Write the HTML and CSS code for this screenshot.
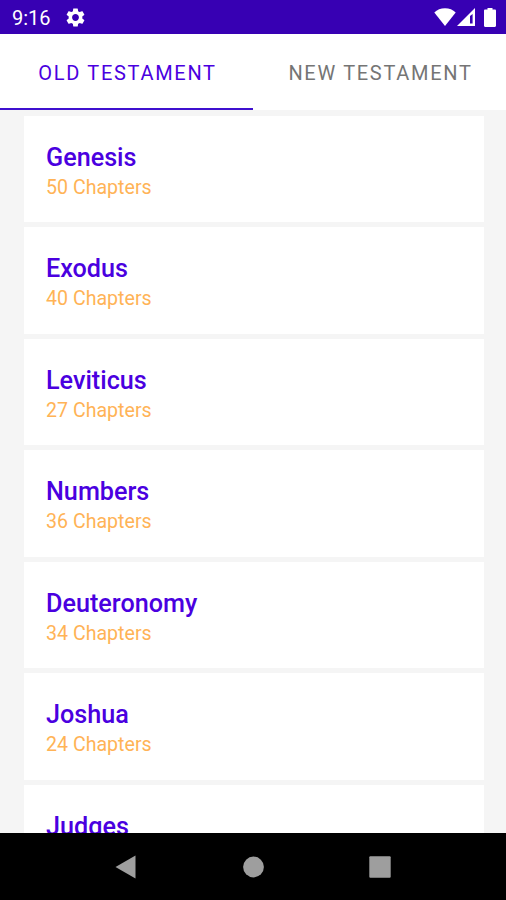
FILE: index.html
```html
<!DOCTYPE html>
<html lang="en">
<head>
    <meta charset="UTF-8">
    <meta name="viewport" content="width=device-width, initial-scale=1.0">
    <title>Bible Books</title>
    <link rel="stylesheet" href="styles.css">
</head>
<body>

<div class="status-bar">
    <span class="clock">9:16</span>
    <svg class="gear" viewBox="2 2 20 20" width="19" height="19">
        <path fill="#fff" d="M19.14 12.94c.04-.3.06-.61.06-.94 0-.32-.02-.64-.07-.94l2.03-1.58a.49.49 0 0 0 .12-.61l-1.92-3.32a.488.488 0 0 0-.59-.22l-2.39.96c-.5-.38-1.03-.7-1.62-.94l-.36-2.54a.484.484 0 0 0-.48-.41h-3.84c-.24 0-.43.17-.47.41l-.36 2.54c-.59.24-1.13.57-1.62.94l-2.39-.96c-.22-.08-.47 0-.59.22L2.74 8.87c-.12.21-.08.47.12.61l2.03 1.58c-.05.3-.09.63-.09.94s.02.64.07.94l-2.03 1.58a.49.49 0 0 0-.12.61l1.92 3.32c.12.22.37.29.59.22l2.39-.96c.5.38 1.03.7 1.62.94l.36 2.54c.05.24.24.41.48.41h3.84c.24 0 .44-.17.47-.41l.36-2.54c.59-.24 1.13-.56 1.62-.94l2.39.96c.22.08.47 0 .59-.22l1.92-3.32c.12-.22.07-.47-.12-.61l-2.01-1.58zM12 15.6c-1.98 0-3.6-1.62-3.6-3.6s1.62-3.6 3.6-3.6 3.6 1.62 3.6 3.6-1.62 3.6-3.6 3.6z"/>
    </svg>
    <div class="status-icons">
        <!-- wifi -->
        <svg class="wifi" viewBox="0 0 22 18" width="22" height="18">
            <path fill="#fff" d="M11 18L0.3 4.6C3 1.8 6.8 0.3 11 0.3s8 1.5 10.7 4.3z"/>
        </svg>
        <!-- mobile signal -->
        <svg class="signal" viewBox="0 0 18 18" width="18" height="18">
            <path fill="#fff" fill-rule="evenodd" d="M0 18L18 0v18zM13 8v7.5h2.600V6z"/>
        </svg>
        <!-- battery -->
        <svg class="battery" viewBox="0 0 12 19" width="12" height="19">
            <path fill="#fff" d="M3.500 0h5v1.500h2.300c.7 0 1.200.5 1.200 1.200v15.100c0 .7-.5 1.200-1.200 1.200H1.200C.5 19 0 18.500 0 17.800V2.700c0-.7.5-1.200 1.200-1.200h2.300z"/>
        </svg>
    </div>
</div>

<div class="tabs">
    <div class="tab active">OLD TESTAMENT</div>
    <div class="tab">NEW TESTAMENT</div>
</div>

<div class="book-list">
    <div class="book">
        <h2>Genesis</h2>
        <p>50 Chapters</p>
    </div>
    <div class="book">
        <h2>Exodus</h2>
        <p>40 Chapters</p>
    </div>
    <div class="book">
        <h2>Leviticus</h2>
        <p>27 Chapters</p>
    </div>
    <div class="book">
        <h2>Numbers</h2>
        <p>36 Chapters</p>
    </div>
    <div class="book">
        <h2>Deuteronomy</h2>
        <p>34 Chapters</p>
    </div>
    <div class="book">
        <h2>Joshua</h2>
        <p>24 Chapters</p>
    </div>
    <div class="book">
        <h2>Judges</h2>
    </div>
</div>

<div class="nav-bar">
    <div class="nav-button">
        <svg viewBox="0 0 22 24" width="22" height="24">
            <path fill="#9e9e9e" d="M20.5 0.5v23L0.5 12z"/>
        </svg>
    </div>
    <div class="nav-button">
        <svg viewBox="0 0 22 22" width="22" height="22">
            <circle cx="11.5" cy="11" r="10.4" fill="#9e9e9e"/>
        </svg>
    </div>
    <div class="nav-button">
        <svg viewBox="0 0 22 22" width="22" height="22">
            <rect x="0.3" y="0.3" width="21.4" height="21.4" rx="1" fill="#9e9e9e"/>
        </svg>
    </div>
</div>

</body>
</html>
```

FILE: styles.css
```css
* {
    box-sizing: border-box;
}
html, body {
    height: 100%;
    margin: 0;
    overflow: hidden;
}
body {
    display: flex;
    flex-direction: column;
    background-color: #f5f5f5;
    font-family: Roboto, sans-serif;
}
svg {
    display: block;
}

/* Status bar */
.status-bar {
    display: flex;
    align-items: center;
    flex: 0 0 34px;
    padding: 0 10px 0 12px;
    background-color: #3700b3;
    color: #fff;
}
.clock {
    width: 54px;
    padding-top: 2px;
    font-size: 20px;
    line-height: 32px;
}
.status-icons {
    display: flex;
    align-items: center;
    margin-left: auto;
}
.signal {
    margin-left: 1px;
}
.battery {
    margin-left: 9px;
}

/* Tabs */
.tabs {
    display: flex;
    flex: 0 0 76px;
    background-color: #fff;
}
.tab {
    flex: 1;
    padding: 4px 0 0 2px;
    border-bottom: 2px solid transparent;
    color: #757575;
    font-size: 20px;
    line-height: 70px;
    letter-spacing: 1.7px;
    text-align: center;
}
.tab.active {
    border-bottom-color: #3f10cf;
    color: #4a00e0;
}

/* Books */
.book-list {
    flex: 1;
    min-height: 0;
    padding: 5.5px 22px 0 24px;
    overflow: hidden;
}
.book {
    height: 106.6px;
    margin-bottom: 5px;
    padding: 27px 22px 0;
    background-color: #fff;
}
.book h2 {
    margin: 0;
    color: #4a00e0;
    font-size: 25.2px;
    font-weight: 500;
    line-height: 30px;
}
.book p {
    margin: 3px 0 0;
    color: #ffb356;
    font-size: 19.6px;
    line-height: 24px;
}

/* Navigation bar */
.nav-bar {
    display: flex;
    justify-content: center;
    flex: 0 0 67px;
    background-color: #000;
}
.nav-button {
    display: flex;
    justify-content: center;
    align-items: center;
    width: 127px;
}
```
